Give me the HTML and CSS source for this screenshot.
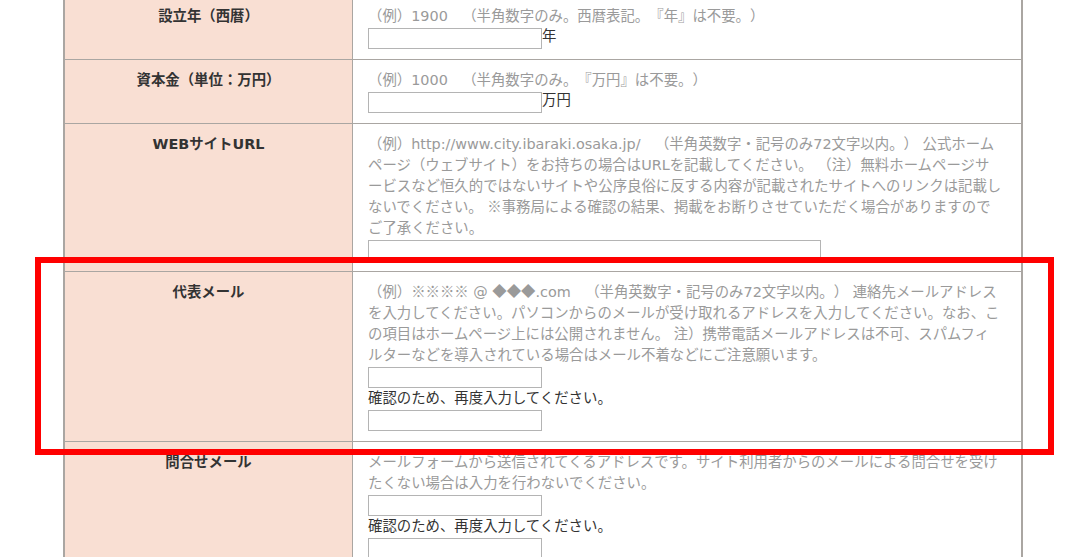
FILE: index.html
```html
<!DOCTYPE html>
<html lang="ja">
<head>
<meta charset="utf-8">
<title>登録フォーム</title>
<link rel="stylesheet" href="styles.css">
</head>
<body>
<div class="page">
  <div class="form">
    <div class="row">
      <div class="label">設立年（西暦）</div>
      <div class="cell">
        <p class="hint">（例）1900　（半角数字のみ。西暦表記。『年』は不要。）</p>
        <div class="field"><input class="in" type="text"><span class="suffix">年</span></div>
      </div>
    </div>
    <div class="row">
      <div class="label">資本金（単位：万円）</div>
      <div class="cell">
        <p class="hint">（例）1000　（半角数字のみ。『万円』は不要。）</p>
        <div class="field"><input class="in" type="text"><span class="suffix">万円</span></div>
      </div>
    </div>
    <div class="row">
      <div class="label">WEBサイトURL</div>
      <div class="cell">
        <p class="hint">（例）http://www.city.ibaraki.osaka.jp/　（半角英数字・記号のみ72文字以内。） 公式ホームページ（ウェブサイト）をお持ちの場合はURLを記載してください。 （注）無料ホームページサービスなど恒久的ではないサイトや公序良俗に反する内容が記載されたサイトへのリンクは記載しないでください。 <span class="cjk">※</span>事務局による確認の結果、掲載をお断りさせていただく場合がありますのでご了承ください。</p>
        <div class="field"><input class="in wide" type="text"></div>
      </div>
    </div>
    <div class="row">
      <div class="label">代表メール</div>
      <div class="cell">
        <p class="hint">（例）<span class="cjk">※※※※</span> @ <span class="cjk">◆◆◆</span>.com　（半角英数字・記号のみ72文字以内。） 連絡先メールアドレスを入力してください。パソコンからのメールが受け取れるアドレスを入力してください。なお、この項目はホームページ上には公開されません。 注）携帯電話メールアドレスは不可、スパムフィルターなどを導入されている場合はメール不着などにご注意願います。</p>
        <div class="field"><input class="in" type="text"></div>
        <p class="note">確認のため、再度入力してください。</p>
        <div class="field"><input class="in" type="text"></div>
      </div>
    </div>
    <div class="row">
      <div class="label">問合せメール</div>
      <div class="cell">
        <p class="hint">メールフォームから送信されてくるアドレスです。サイト利用者からのメールによる問合せを受けたくない場合は入力を行わないでください。</p>
        <div class="field"><input class="in" type="text"></div>
        <p class="note">確認のため、再度入力してください。</p>
        <div class="field"><input class="in" type="text"></div>
      </div>
    </div>
  </div>
  <div class="highlight"></div>
</div>
</body>
</html>
```

FILE: styles.css
```css
html, body {
  margin: 0;
  padding: 0;
  overflow: hidden;
  background: #ffffff;
}

body {
  font-family: "DejaVu Sans", "Noto Sans CJK JP", sans-serif;
  font-size: 14.4px;
  line-height: 21px;
  color: #333333;
  text-spacing-trim: space-all;
}

.page {
  position: relative;
  height: 557px;
  overflow: hidden;
}

.form {
  margin: -6px 0 0 63px;
  width: 960px;
  box-sizing: border-box;
  border: 2px solid #aaa6a2;
}

.row {
  display: grid;
  grid-template-columns: 288px 1fr;
  border-top: 1px solid #aaa6a2;
}

.row:first-child {
  border-top: none;
}

.label {
  background: #f9dfd3;
  border-right: 1px solid #aaa6a2;
  padding: 10px;
  text-align: center;
  font-weight: bold;
  color: #333333;
}

.cell {
  padding: 10px 19px 10px 15px;
  min-width: 0;
}

.hint {
  margin: 0;
  color: #9a9a9a;
  line-break: loose;
  text-spacing-trim: space-all;
}

.cjk {
  font-family: "Noto Sans CJK JP", sans-serif;
  line-height: 1;
}

.note {
  margin: 0;
  color: #333333;
}

.field {
  display: flex;
  align-items: flex-start;
  margin-top: 1px;
  height: 21px;
}

.in {
  display: block;
  width: 174px;
  height: 21px;
  box-sizing: border-box;
  margin: 0;
  padding: 0 2px;
  border: 1px solid #b4b4b4;
  background: #ffffff;
  font: inherit;
}

.in.wide {
  width: 453px;
}

.suffix {
  line-height: 17px;
  color: #333333;
}

.highlight {
  position: absolute;
  left: 35px;
  top: 257px;
  width: 1019px;
  height: 198px;
  box-sizing: border-box;
  border: 6px solid #ff0000;
  pointer-events: none;
}
```
